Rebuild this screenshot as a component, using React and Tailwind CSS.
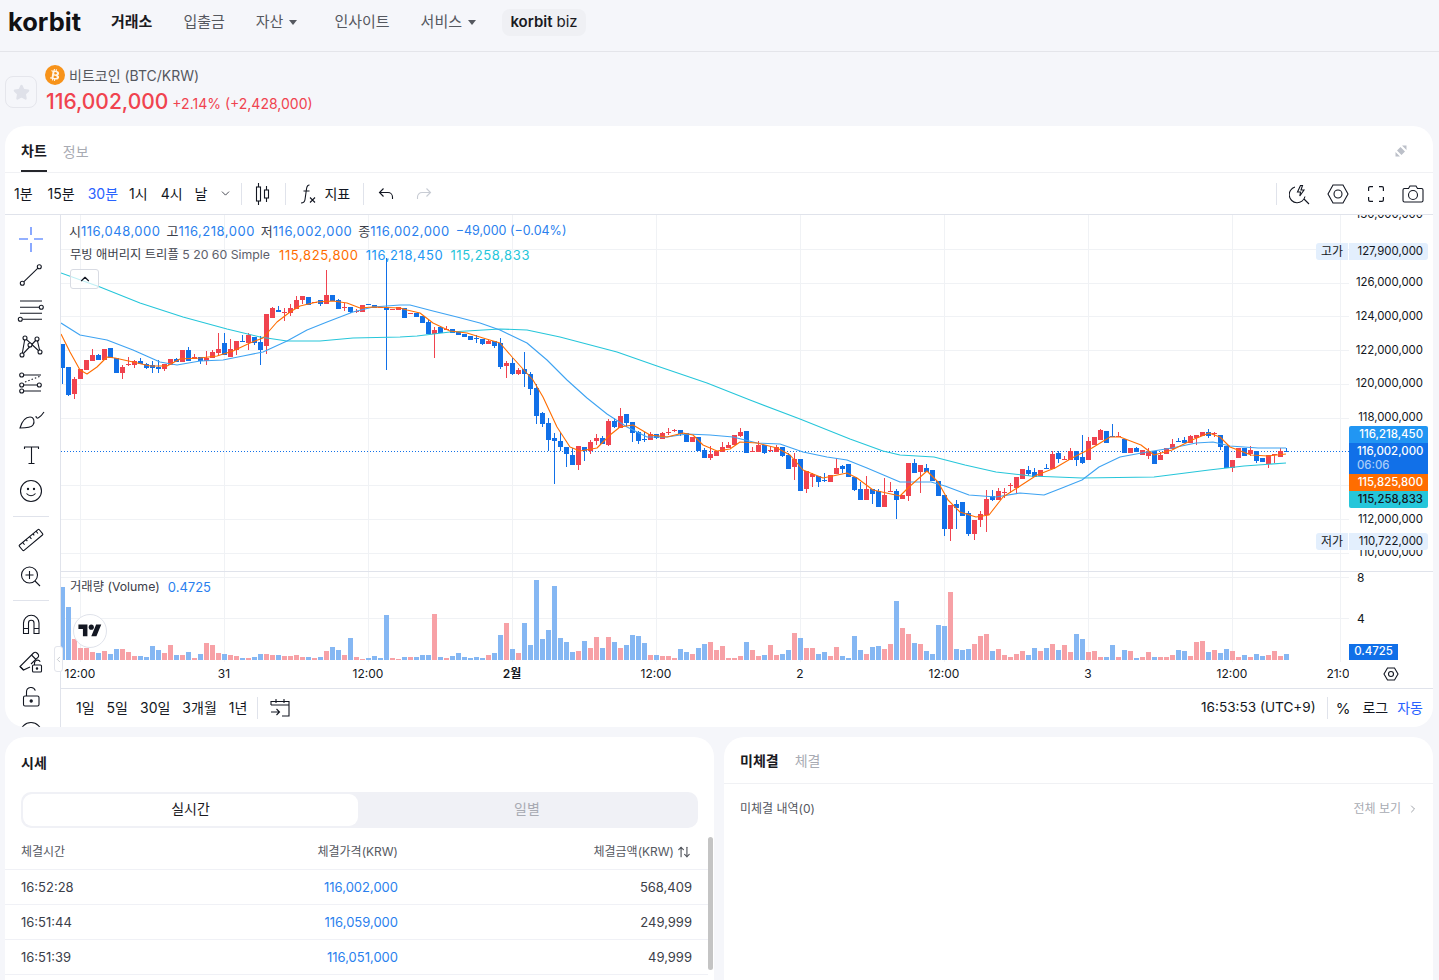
import React from "react";
import { Star, ChevronDown, ChevronUp, ChevronLeft, ChevronRight, ArrowUpDown } from "lucide-react";
import { FaBtc } from "react-icons/fa";

// candle rows: [colour, bodyTop, bodyBottom, high, low], values read at 3x from the chart
const section1 = [
  ["b",387,458,387,507],["b",456,540,456,543],["r",492,538,487,552],["r",462,492],["r",435,465],["r",420,438,402,438],["b",420,435,416,435],["r",402,435],["b",399,428],["b",429,474],["r",456,474,450,492],["r",448,451,426,453],["r",438,450,435,459],["b",438,447,429,447],["b",447,459,445,462],["b",450,459,438,474],["b",456,462,435,474],["r",447,462,447,468],["r",432,450],["b",432,441,429,441],["r",405,441],["b",405,438,396,438],["r",426,431,417,431],["b",426,438,426,447],["r",429,438,408,450],["r",411,429,405,429],["r",402,414,354,423],["b",384,420,354,420],["r",402,426,372,426],["r",378,405,378,420],["b",378,381,360,381],["r",360,384,354,405],["b",366,384,366,390],["b",381,405,363,450],["r",297,393,297,417],["r",279,309,276,309],["b",285,291,273,291],["r",291,294,279,318],["r",279,294,267,303],["r",255,282,243,282],["r",243,255,243,267],["b",246,270],["r",261,264],["b",255,267,255,273],["r",240,267,165,267],["b",240,258],["b",255,282,252,282],["r",276,279,264,288],["b",276,291,276,294],["r",288,291,282,294],["r",270,291],["b",267,270],["b",270,279],["r",276,279],["b",276,285,130,465],["r",282,285],["r",276,285],
];
const section2 = [
  ["b",144,174],["r",159,161],["b",159,171],["b",168,189],["b",186,222,180,222],["r",210,222,201,294],["b",201,219,198,219],["r",207,210,198,210],["b",207,219],["b",216,225],["b",222,231],["b",228,240],["b",233,235,225,249],["b",237,252,237,255],["r",243,252,237,252],["b",243,258,243,264],["b",249,321,234,327],["r",309,318,303,354],["b",309,342,294,345],["r",330,342,324,345],["b",327,342,276,381],["b",342,387,336,405],["b",384,468,372,492],["b",459,492,456,501],["b",489,540,474,573],["b",534,543,519,672],["b",543,561,516,573],["b",561,582,561,621],["b",585,615,564,615],["r",558,615,558,630],["b",561,574,561,603],["r",546,574,540,582],["r",534,543,522,555],["b",534,552,528,552],["r",483,555,477,558],["b",483,501,474,504],["r",468,504,444,504],["b",462,489,462,501],["b",486,519,486,546],["b",516,543,513,552],["b",537,540,516,546],["r",522,540,516,540],["b",522,534,522,537],["r",519,537,516,537],["r",516,519,504,525],["r",510,514,507,516],["b",510,522,510,528],["b",519,546],["r",531,546],["b",531,573],["b",570,594,564,594],["r",582,594,558,600],["r",573,588],["r",561,576,546,576],["r",555,564,546,564],["r",525,555],["r",516,528,504,531],["b",513,579],["r",573,576,561,576],["r",555,576,543,576],["b",555,579,555,582],["r",570,573,558,576],["r",561,576,555,576],["b",561,588,561,591],["b",585,627,579,627],["r",597,621,579,660],["b",597,693],["r",633,687,633,699],["r",642,651,639,681],["b",648,666,648,681],["b",660,662,639,665],["r",645,666],["r",624,642,594,642],["b",618,627,615,639],["b",612,651],["b",651,690,651,693],["b",687,720,666,720],["r",687,720,648,720],["b",687,702,687,732],["b",693,741,687,741],["r",705,741,654,741],["r",693,696,666,696],["b",693,720,687,777],
];
const section3 = [
  ["r",345,358],["r",250,348,250,362],["b",250,279,238,279],["r",255,276,255,339],["b",264,276,252,276],["b",270,303],["b",303,348],["b",345,447,345,467],["r",375,447,375,483],["b",372,384,360,447],["b",366,408],["b",399,462,393,468],["r",420,462,420,480],["r",402,420,393,441],["r",357,405,330,456],["b",348,360,330,363],["r",333,360,324,360],["r",336,339,324,354],["r",315,318,309,339],["r",291,324,291,339],["r",267,297],["b",270,282,258,288],["b",276,291,264,291],["r",270,288],["b",264,267,252,267],["r",222,267,213,267],["b",219,237,213,249],["r",237,240,228,240],["r",213,240,204,240],["b",213,240,213,258],["b",231,249,165,252],["r",183,240,172,240],["r",171,195],["r",150,180,147,180],["b",153,189],["b",168,171,132,171],["r",168,171,156,171],["b",177,219],["r",204,219],["b",204,216,201,216],["r",210,225],["r",213,228,204,237],["b",213,252],["r",225,240,216,240],["r",204,222],["r",192,207,177,207],["b",183,186,174,186],["b",180,189,171,189],["r",168,189,165,189],["r",165,174,165,195],["r",156,168],["b",156,168,147,174],["r",159,162,156,172],["b",165,201,165,210],["b",198,264],["r",240,264,240,276],["r",204,234],["b",204,228],["r",210,222,198,228],["b",213,243,213,249],["b",234,246],["r",225,252,225,264],["r",222,225,222,249],["r",213,231,204,231],["b",213,214,204,214],
];

const toCandles = (rows, startIndex, baseY) =>
  rows.map(([c, top, bottom, high = top, low = bottom], i) => ({
    i: startIndex + i,
    color: c === "b" ? "#1170e8" : "#f0434f",
    top: baseY + top / 3,
    bottom: baseY + bottom / 3,
    high: baseY + high / 3,
    low: baseY + low / 3,
  }));

const candles = [
  ...toCandles(section1, 0, 215),
  ...toCandles(section2, 57, 260),
  ...toCandles(section3, 140, 380),
];

// volume: top of each bar (3x from y=570) and direction
const volumeText = "50b 110b 207r 234r 234r 246r 249b 243r 252b 237b 237r 246r 258r 258b 261b 228b 240b 249r 225r 255b 255r 246b 264r 252b 219r 225r 249r 252b 255r 258r 264b 264r 261b 252b 252r 255r 255b 258r 258r 255r 261r 261b 264r 261b 243r 231b 240b 255r 204b 261r 267r 264b 258b 264b 135b 264r 267r 261b 261r 261b 255b 255b 132r 261b 264r 258b 249b 261b 264b 261b 264b 255r 249b " +
  "195b 159r 237b 249r 159b 225b 30b 207b 180b 48b 204b 216b 246b 243r 213b 234r 201r 234b 201r 216b 234r 225b 195b 198b 219b 255r 255b 258r 258r 264r 237b 246b 252r 234b 222b 216r 240r 228r 264r 264r 258r 216b 240r 258r 255b 225r 255r 252b 240b 189r 204b 234r 234r 252b 246b 258r 231r 258b 264b 198b 240b 252r 231b 228b 237r 222r 93b 174r 192r 219b 222r 243b 252b 165b 168b 66r 237b 240b 237b 222r 198r 192r 243b 237r " +
  "255r 261r 252r 243r 255b 234b 243r 234b 222r 240b 225r 246r 192b 207b 246r 243r 261r 261b 225b 261r 240b 243r 264b 261r 246r 261b 261r 261r 255r 240b 243b 258r 216r 213r 246b 240r 249b 237b 243r 261r 255b 261r 252b 258b 255r 243r 258r 252b";
const volumes = volumeText.split(" ").map((v, i) => ({
  i,
  top: 570 + parseInt(v) / 3,
  color: v.endsWith("b") ? "#85b7f3" : "#f7a1a6",
}));

const ma5 = "61,334 70,352 80,370 87,374 97,367 107,357 115,358 133,362 150,366 167,366 180,359 200,358 217,356 233,351 250,343 263,338 277,322 290,312 300,306 317,302 333,301 347,303 360,308 373,307 400,308 407,310 420,313 433,323 450,331 467,333 483,338 500,343 513,358 533,380 543,397 557,427 570,447 580,451 597,448 610,435 620,427 633,425 650,435 667,437 683,433 693,435 703,445 717,451 730,449 740,442 757,443 777,448 790,455 803,470 823,478 847,473 857,478 873,490 900,496 909,487 927,471 938,482 948,500 960,512 976,517 989,515 1003,497 1017,488 1037,475 1055,468 1072,458 1092,448 1110,437 1120,437 1141,445 1154,455 1172,450 1192,440 1209,433 1220,437 1230,447 1251,455 1268,456 1286,454";
const ma20 = "61,323 80,335 107,340 133,350 160,362 177,365 200,361 223,360 243,356 263,352 287,341 307,330 327,322 353,312 373,307 400,305 410,305 433,311 457,317 480,323 500,330 527,343 547,360 567,380 587,398 607,414 627,427 647,437 667,437 687,434 710,435 733,437 757,443 780,444 803,452 827,457 847,460 867,468 900,482 931,482 945,486 969,495 996,497 1020,493 1044,495 1062,488 1082,480 1099,467 1120,457 1147,452 1172,448 1196,443 1213,442 1230,446 1258,448 1286,448";
const ma60 = "61,273 100,287 140,303 183,317 227,329 260,337 287,341 320,341 353,338 400,337 417,336 450,332 500,329 527,330 560,337 617,352 657,366 707,383 750,400 800,419 850,439 883,451 900,455 934,457 965,465 996,472 1031,476 1082,478 1154,477 1209,470 1244,466 1286,463";

const gridY = [249, 283, 316, 350, 384, 418, 485, 519, 553];
const gridX = [80, 224, 368, 512, 656, 800, 944, 1088, 1232, 1340];
const priceTicks = [
  { label: "130,000,000", y: 215 }, { label: "126,000,000", y: 283 }, { label: "124,000,000", y: 317 },
  { label: "122,000,000", y: 351 }, { label: "120,000,000", y: 384 }, { label: "118,000,000", y: 418 },
  { label: "112,000,000", y: 520 }, { label: "110,000,000", y: 553 }, { label: "8", y: 578, left: true }, { label: "4", y: 619, left: true },
];
const timeTicks = [
  { label: "12:00", x: 80 }, { label: "31", x: 224 }, { label: "12:00", x: 368 }, { label: "2월", x: 512, bold: true },
  { label: "12:00", x: 656 }, { label: "2", x: 800 }, { label: "12:00", x: 944 }, { label: "3", x: 1088 }, { label: "12:00", x: 1232 }, { label: "21:0", x: 1338 },
];

const trades = [
  ["16:52:28", "116,002,000", "568,409"],
  ["16:51:44", "116,059,000", "249,999"],
  ["16:51:39", "116,051,000", "49,999"],
];

function ChartDrawing() {
  return (
    <svg width="1372" height="473" viewBox="61 215 1372 473" className="absolute left-0 top-0" shapeRendering="crispEdges">
      {gridY.map((y) => <rect key={y} x="61" y={y} width="1288" height="1" fill="#f0f2f5" />)}
      <rect x="61" y="577" width="1288" height="1" fill="#f0f2f5" />
      <rect x="61" y="618" width="1288" height="1" fill="#f0f2f5" />
      {gridX.map((x) => <rect key={x} x={x} y="215" width="1" height="447" fill="#f0f2f5" />)}
      <rect x="61" y="571" width="1372" height="1" fill="#e0e3eb" />
      <line x1="61" y1="451.5" x2="1349" y2="451.5" stroke="#1170e8" strokeDasharray="1 2" />
      {volumes.map((v) => (
        <rect key={v.i} x={60 + 6 * v.i} y={v.top} width="5" height={660 - v.top} fill={v.color} />
      ))}
      {candles.map((c) => (
        <g key={c.i} fill={c.color}>
          <rect x={62 + 6 * c.i} y={c.high} width="1" height={c.low - c.high} />
          <rect x={60 + 6 * c.i} y={c.top} width="5" height={Math.max(c.bottom - c.top, 1)} />
        </g>
      ))}
      <g fill="none" strokeWidth="1.1" strokeLinejoin="round" shapeRendering="geometricPrecision">
        <polyline points={ma60} stroke="#26c6da" />
        <polyline points={ma20} stroke="#3ea3f2" />
        <polyline points={ma5} stroke="#ff6d00" />
      </g>
    </svg>
  );
}

function ToolIcon({ children, className = "" }) {
  return (
    <svg width="28" height="28" viewBox="0 0 28 28" fill="none" stroke="#131722" strokeWidth="1.1" className={className}>
      {children}
    </svg>
  );
}

function Node({ x, y }) {
  return <circle cx={x} cy={y} r="2" fill="#fff" />;
}

function ToolSlot({ children }) {
  return <div className="flex h-9 shrink-0 items-center">{children}</div>;
}

function LeftTools() {
  return (
    <div className="flex h-full w-[56px] shrink-0 flex-col items-center overflow-hidden border-r border-[#e0e3eb] pr-[3px] pt-[6px]">
      {/* crosshair */}
      <ToolSlot>
        <ToolIcon><path d="M14 2v8M14 18v9M2 14h9M17 14h9" stroke="#2962ff" /></ToolIcon>
      </ToolSlot>
      <ToolSlot>
        <ToolIcon><path d="M6.700 20.800 20.900 7.200" /><Node x={5.3} y={22.3} /><Node x={22.3} y={5.7} /></ToolIcon>
      </ToolSlot>
      <ToolSlot>
        <ToolIcon>
          <path d="M3 4h22M3 10.300h19M3 16.300h22M5.500 22.300H25" /><Node x={24.3} y={10.3} /><Node x={3.3} y={22.3} />
        </ToolIcon>
      </ToolSlot>
      <ToolSlot>
        <ToolIcon>
          <path d="M5 22 8 5l15 14L20 6z" /><Node x={8} y={5} /><Node x={20} y={6} /><Node x={13} y={12} /><Node x={5} y={22} /><Node x={23} y={19} />
        </ToolIcon>
      </ToolSlot>
      <ToolSlot>
        <ToolIcon>
          <path d="M7 6h17M7 16h13M7 22h17" /><path d="M8 13 24 7" strokeDasharray="1.500 2" />
          <Node x={4.7} y={6} /><Node x={4.7} y={16} /><Node x={22.3} y={16} /><Node x={4.7} y={22} />
        </ToolIcon>
      </ToolSlot>
      <ToolSlot>
        <ToolIcon>
          <path d="M3 23C5 16 9 12 13 12c4 0 5 5 3 8-2 3-8 3-13 3Z" /><path d="M19 11c0 4 4 2 8-4" />
        </ToolIcon>
      </ToolSlot>
      <ToolSlot>
        <ToolIcon><path d="M7.500 8V6h14v2M14.500 6v16.500M11.500 22.500h6" /></ToolIcon>
      </ToolSlot>
      <ToolSlot>
        <ToolIcon>
          <circle cx="14" cy="14" r="10.500" /><circle cx="11" cy="12" r=".6" fill="#131722" /><circle cx="17" cy="12" r=".6" fill="#131722" /><path d="M9.500 16.500c2.500 3 6.500 3 9 0" />
        </ToolIcon>
      </ToolSlot>
      <div className="mb-[5px] mt-[7px] h-px w-9 shrink-0 bg-[#e0e3eb]" />
      <ToolSlot>
        <ToolIcon>
          <g transform="rotate(-40 14 14)">
            <rect x="1" y="10.500" width="26" height="7" rx="1" /><path d="M6 10.500v3M10.500 10.500v2M15 10.500v3M19.500 10.500v2M23.500 10.500v3" />
          </g>
        </ToolIcon>
      </ToolSlot>
      <ToolSlot>
        <ToolIcon><circle cx="12.500" cy="13" r="8" /><path d="M12.500 9v8M8.500 13h8M18 19l5 5" /></ToolIcon>
      </ToolSlot>
      <div className="mb-[6px] mt-[6px] h-px w-9 shrink-0 bg-[#e0e3eb]" />
      <ToolSlot>
        <ToolIcon>
          <path d="M6.500 22.500V12a7.750 7.750 0 0 1 15.500 0v10.500h-5V12a2.750 2.750 0 0 0-5.500 0v10.500zM6.500 17.500h5M16.500 17.500h5.500" />
        </ToolIcon>
      </ToolSlot>
      <ToolSlot>
        <ToolIcon>
          <path d="M13 20 6.500 23 3 19.500 16.500 6a2.400 2.400 0 0 1 3.400 0l1 1a2.400 2.400 0 0 1 0 3.400L14 17" />
          <path d="M14.500 8 19 12.500M3 19.500l3.500 3.500" />
          <rect x="15.500" y="18" width="9" height="7" rx="1" /><path d="M17.500 18v-2a3 3 0 0 1 5.700-1.200" /><circle cx="20" cy="21.500" r=".7" fill="#131722" />
        </ToolIcon>
      </ToolSlot>
      <ToolSlot>
        <ToolIcon>
          <rect x="6.500" y="13" width="15.500" height="10" rx="1.500" /><path d="M9.500 13V9a4.500 4.500 0 0 1 8.800-1.300" /><circle cx="14.200" cy="18" r="1.100" fill="#131722" />
        </ToolIcon>
      </ToolSlot>
      <ToolSlot>
        <ToolIcon><circle cx="14" cy="14" r="10.500" /><circle cx="14" cy="12" r="3" /></ToolIcon>
      </ToolSlot>
    </div>
  );
}

function TimeButton({ children, active, className = "" }) {
  return <span className={`${active ? "text-[#2962ff]" : "text-[#131722]"} ${className}`}>{children}</span>;
}

function ToolbarDivider({ className = "" }) {
  return <div className={`h-[22px] w-px bg-[#e0e3eb] ${className}`} />;
}

function ChartToolbar() {
  return (
    <div className="flex h-[42px] items-center border-b border-[#e0e3eb] pl-[9px] pr-[9px] text-[14px] leading-none">
      <div className="flex items-center gap-[13px]">
        <TimeButton>1분</TimeButton>
        <TimeButton className="ml-[2px]">15분</TimeButton>
        <TimeButton active>30분</TimeButton>
        <TimeButton className="-ml-[2px]">1시</TimeButton>
        <TimeButton>4시</TimeButton>
        <TimeButton className="-ml-[1px]">날</TimeButton>
      </div>
      <ChevronDown size={13} strokeWidth={1.4} className="ml-[12px] text-[#131722]" />
      <ToolbarDivider className="ml-[9px]" />
      <svg width="16" height="22" viewBox="0 0 16 22" fill="none" stroke="#131722" strokeWidth="1.1" className="ml-[12px]">
        <path d="M4.500 0v4M4.500 18v4M12.500 3v4M12.500 15v4" />
        <rect x="2.500" y="4" width="4" height="14" /><rect x="10.500" y="7" width="4" height="8" />
      </svg>
      <ToolbarDivider className="ml-[15px]" />
      <svg width="16" height="20" viewBox="0 0 16 20" fill="none" stroke="#131722" strokeWidth="1.1" className="ml-[14px]">
        <path d="M9.500 1C7 1 6.800 2.500 6.500 5L5 15.500C4.700 18 3.500 19 1 19M3.500 7h6M10 13.500l5 5M15 13.500l-5 5" />
      </svg>
      <span className="ml-[8px] text-[#131722]">지표</span>
      <ToolbarDivider className="ml-[13px]" />
      <svg width="16" height="14" viewBox="0 0 16 14" fill="none" stroke="#131722" strokeWidth="1.1" className="ml-[14px]">
        <path d="M5.500 1.500 1.500 5.500l4 4M1.500 5.500H10a4.500 4.500 0 0 1 4.500 4.500v2" />
      </svg>
      <svg width="16" height="14" viewBox="0 0 16 14" fill="none" stroke="#c8ccd4" strokeWidth="1.1" className="ml-[22px]">
        <path d="M10.500 1.500l4 4-4 4M14.500 5.500H6A4.500 4.500 0 0 0 1.500 10v2" />
      </svg>

      <div className="ml-auto flex items-center">
        <ToolbarDivider className="mr-[12px]" />
        <svg width="22" height="22" viewBox="0 0 22 22" fill="none" stroke="#131722" strokeWidth="1.1">
          <path d="M6 4a8 8 0 1 0 10 9.500M15 16l5 5" />
          <path d="M11.500 2.500 8.500 9h3l-.7 4 4.200-6h-3l1.500-4.500z" />
        </svg>
        <svg width="22" height="20" viewBox="0 0 22 20" fill="none" stroke="#131722" strokeWidth="1.1" className="ml-[16px]">
          <path d="M6 1h10l5 9-5 9H6l-5-9z" /><circle cx="11" cy="10" r="4" />
        </svg>
        <svg width="16" height="16" viewBox="0 0 16 16" fill="none" stroke="#131722" strokeWidth="1.2" className="ml-[19px]">
          <path d="M.6 5V2A1.400 1.400 0 0 1 2 .6h3M11 .6h3A1.400 1.400 0 0 1 15.400 2v3M15.400 11v3a1.400 1.400 0 0 1-1.400 1.400h-3M5 15.400H2A1.400 1.400 0 0 1 .6 14v-3" />
        </svg>
        <svg width="22" height="18" viewBox="0 0 22 18" fill="none" stroke="#131722" strokeWidth="1.1" className="ml-[18px]">
          <path d="M1 5a1.500 1.500 0 0 1 1.500-1.500h4l1.500-2.500h6l1.500 2.500h4A1.500 1.500 0 0 1 21 5v10.500a1.500 1.500 0 0 1-1.500 1.500h-17A1.500 1.500 0 0 1 1 15.500z" />
          <circle cx="11" cy="10" r="4.500" />
        </svg>
      </div>
    </div>
  );
}

function PriceTag({ className, label, children }) {
  return (
    <>
      <span className={`absolute left-[1255px] flex h-[17px] w-[32px] items-center justify-center rounded-l-[3px] bg-[#e3effd] text-[12px] text-[#131722] ${className}`}>
        {label}
      </span>
      <span className={`absolute left-[1288px] flex h-[17px] w-[79px] items-center justify-end rounded-r-[3px] bg-[#e3effd] pr-[5px] ${className}`}>
        {children}
      </span>
    </>
  );
}

function ChartArea() {
  return (
    <div className="relative h-[474px] overflow-hidden border-b border-[#e0e3eb] text-[12px] text-[#131722]">
      <ChartDrawing />

      {/* legend */}
      <div className="absolute left-[8px] top-[8px] flex h-[17px] items-center whitespace-nowrap text-[13px] leading-none text-[#3c4049]">
        <span>시</span><span className="tracking-[0.5px] text-[#2a7fee]">116,048,000</span>
        <span className="ml-[6px]">고</span><span className="tracking-[0.5px] text-[#2a7fee]">116,218,000</span>
        <span className="ml-[6px]">저</span><span className="tracking-[0.5px] text-[#2a7fee]">116,002,000</span>
        <span className="ml-[6px]">종</span><span className="tracking-[0.5px] text-[#2a7fee]">116,002,000</span>
        <span className="ml-[6px] text-[12.5px] text-[#2a7fee]">−49,000 (−0.04%)</span>
      </div>
      <div className="absolute left-[9px] top-[32px] flex h-[17px] items-center gap-[7px] whitespace-nowrap text-[13px] leading-none text-[#5d606b]">
        <span className="text-[12.3px]"><span className="text-[#3c4049]">무빙 애버리지 트리플</span> 5 20 60 Simple</span>
        <span className="ml-[2px] tracking-[0.6px] text-[#ff6d00]">115,825,800</span>
        <span className="tracking-[0.6px] text-[#2196f3]">116,218,450</span>
        <span className="tracking-[0.6px] text-[#26c6da]">115,258,833</span>
      </div>
      <div className="absolute left-[9px] top-[54px] flex h-[20px] w-[29px] items-center justify-center rounded-[3px] border border-[#d8dbe3] bg-white/70">
        <ChevronUp size={14} strokeWidth={2} className="text-[#131722]" />
      </div>
      <div className="absolute left-[9px] top-[364px] flex h-[17px] items-center gap-[8px] whitespace-nowrap text-[12.3px] leading-none text-[#3c4049]">
        <span>거래량 (Volume)</span><span className="text-[13px] text-[#2a7fee]">0.4725</span>
      </div>

      {/* tradingview badge */}
      <div className="absolute left-[12px] top-[399px] flex h-[34px] w-[34px] items-center justify-center rounded-full border border-[#e0e3eb] bg-white">
        <svg width="24" height="18" viewBox="0 0 36 28" fill="#131722">
          <path d="M14 22H7V11H0V4h14v18zM28 22h-8l7.500-18h8L28 22z" /><circle cx="20" cy="8" r="4" />
        </svg>
      </div>

      {/* axes */}
      {priceTicks.map((t) => (
        <span
          key={t.label}
          className={`absolute -translate-y-1/2 whitespace-nowrap text-[11.4px] ${t.left ? "left-[1296px] text-[12px]" : "right-[10px]"}`}
          style={{ top: t.y - 215 }}
        >
          {t.label}
        </span>
      ))}
      {timeTicks.map((t) => (
        <span
          key={t.x}
          className={`absolute top-[459px] -translate-x-1/2 -translate-y-1/2 whitespace-nowrap ${t.bold ? "font-semibold" : ""}`}
          style={{ left: t.x - 61 }}
        >
          {t.label}
        </span>
      ))}
      <div className="absolute left-[1288px] top-[445px] h-[28px] w-[84px] bg-white" />
      <svg width="16" height="14" viewBox="0 0 16 14" fill="none" stroke="#131722" strokeWidth="1.1" className="absolute left-[1322px] top-[452px]">
        <path d="M4.500 1h7L15 7l-3.500 6h-7L1 7z" /><circle cx="8" cy="7" r="2.500" />
      </svg>

      {/* price tags */}
      <div className="text-[11.4px]">
        <PriceTag className="top-[28px]" label="고가">127,900,000</PriceTag>
        <PriceTag className="top-[318px]" label="저가">110,722,000</PriceTag>
        <span className="absolute left-[1288px] top-[211px] flex h-[17px] w-[79px] items-center justify-end rounded-t-[2px] bg-[#2196f3] pr-[5px] font-medium text-white">116,218,450</span>
        <div className="absolute left-[1288px] top-[228px] flex h-[31px] w-[79px] flex-col bg-[#1170e8] pl-[8px] pr-[5px] font-medium leading-[14px] text-white">
          <span className="pt-[1px] text-right">116,002,000</span>
          <span className="text-[#a9cdf8]">06:06</span>
        </div>
        <span className="absolute left-[1288px] top-[259px] flex h-[17px] w-[79px] items-center justify-end bg-[#ff6d00] pr-[5px] font-medium text-white">115,825,800</span>
        <span className="absolute left-[1288px] top-[276px] flex h-[17px] w-[79px] items-center justify-end rounded-b-[2px] bg-[#26c6da] pr-[5px] font-medium text-[#131722]">115,258,833</span>
        <span className="absolute left-[1288px] top-[429px] flex h-[16px] w-[49px] items-center justify-center bg-[#1170e8] font-medium text-white">0.4725</span>
      </div>
    </div>
  );
}

function ChartBottomBar() {
  return (
    <div className="flex h-[38px] items-center pl-[15px] pr-[10px] text-[14px] leading-none text-[#131722]">
      <div className="flex items-center gap-[12px]">
        <span>1일</span><span>5일</span><span>30일</span><span>3개월</span><span>1년</span>
      </div>
      <div className="ml-[10px] h-[22px] w-px bg-[#e0e3eb]" />
      <svg width="20" height="20" viewBox="0 0 20 20" fill="none" stroke="#131722" strokeWidth="1.1" className="ml-[12px]">
        <path d="M1 7V3.500h18V18h-7M1 7h18M6 1v4M14 1v4M1 14h8M6.500 11l3 3-3 3" />
      </svg>
      <div className="ml-auto flex items-center">
        <span className="text-[13.6px]">16:53:53 (UTC+9)</span>
        <div className="ml-[11px] h-[22px] w-px bg-[#e0e3eb]" />
        <span className="ml-[8px] text-[15px]">%</span>
        <span className="ml-[12px]">로그</span>
        <span className="ml-[9px] text-[#2962ff]">자동</span>
      </div>
    </div>
  );
}

function ChartCard() {
  return (
    <section className="relative mx-[5px] h-[601px] w-[1428px] overflow-hidden rounded-[20px] bg-white">
      <div className="flex h-[47px] items-stretch gap-[16px] border-b border-[#f0f1f4] pl-[16px] pr-[26px] text-[14px]">
        <span className="flex items-center border-b-2 border-[#25262b] pt-[4px] font-semibold text-[#1a1a1f]">차트</span>
        <span className="flex items-center pt-[4px] text-[#a8abb3]">정보</span>
        <div className="ml-auto flex items-center pt-[4px]">
          <svg width="12" height="12" viewBox="0 0 12 12" fill="#bcc0c9">
            <path d="M7 .5h4.500V5zM.5 7 5 11.500H.5zM2 5.500 5.500 2 10 6.500 6.500 10z" />
          </svg>
        </div>
      </div>
      <ChartToolbar />
      <div className="flex h-[512px]">
        <LeftTools />
        <div className="min-w-0 flex-1">
          <ChartArea />
          <ChartBottomBar />
        </div>
      </div>
      <div className="absolute left-[49px] top-[520px] flex h-[26px] w-[9px] items-center justify-center rounded-[3px] border border-[#e3e5ec] bg-white">
        <ChevronLeft size={9} strokeWidth={1.5} className="shrink-0 text-[#9a9ea8]" />
      </div>
    </section>
  );
}

function PriceCard() {
  return (
    <section className="relative h-[300px] w-[709px] rounded-t-[20px] bg-white pt-[16px]">
      <h2 className="pl-[16px] text-[14px] font-semibold leading-[20px] text-[#1a1a1f]">시세</h2>
      <div className="ml-[16px] mt-[19px] flex h-[36px] w-[677px] items-center rounded-[10px] bg-[#f0f1f6] p-[2px] text-[14px]">
        <div className="flex h-[32px] w-[335px] items-center justify-center rounded-[9px] bg-white pb-[3px] text-[#1a1a1f]">실시간</div>
        <div className="flex flex-1 items-center justify-center pb-[3px] text-[#a8abb3]">일별</div>
      </div>
      <div className="mr-[6px] mt-[6px]">
        <div className="grid h-[36px] grid-cols-[200px_177px_1fr] items-center border-b border-[#f0f1f6] pl-[16px] pr-[17px] text-[12px] text-[#55585f]">
          <span>체결시간</span>
          <span className="text-right">체결가격(KRW)</span>
          <span className="flex items-center justify-end gap-[3px]">
            체결금액(KRW)
            <ArrowUpDown size={14} strokeWidth={2} className="text-[#55585f]" />
          </span>
        </div>
        {trades.map(([time, price, amount]) => (
          <div key={time} className="grid h-[35px] grid-cols-[200px_177px_1fr] items-center border-b border-[#f0f1f6] pl-[16px] pr-[16px] pt-[1px] text-[13px] text-[#3c4049]">
            <span>{time}</span>
            <span className="text-right text-[#2a7fee]">{price}</span>
            <span className="text-right">{amount}</span>
          </div>
        ))}
      </div>
      <div className="absolute left-[703px] top-[100px] h-[133px] w-[5px] rounded-full bg-[#c4c4c4]" />
    </section>
  );
}

function OrdersCard() {
  return (
    <section className="h-[300px] w-[709px] rounded-t-[20px] bg-white">
      <div className="flex h-[47px] items-center gap-[16px] border-b border-[#f0f1f4] pl-[16px] pt-[1px] text-[14px]">
        <span className="font-semibold text-[#1a1a1f]">미체결</span>
        <span className="text-[#a8abb3]">체결</span>
      </div>
      <div className="flex h-[48px] items-center justify-between pl-[16px] pr-[14px] pt-[1px] text-[12px]">
        <span className="text-[#55585f]">미체결 내역(0)</span>
        <span className="flex items-center gap-[6px] text-[#a8abb3]">
          전체 보기
          <ChevronRight size={12} strokeWidth={1.6} className="text-[#888b93]" />
        </span>
      </div>
    </section>
  );
}

function Header() {
  return (
    <header className="flex h-[52px] items-center border-b border-[#e4e5ea] pb-[12px] pl-[8px] pt-[5px] text-[15px] text-[#55585f]">
      <span className="text-[25.5px] font-bold leading-none text-[#111114]">korbit</span>
      <nav className="ml-[30px] flex items-center">
        <span className="font-semibold text-[#1a1a1f]">거래소</span>
        <span className="ml-[31px]">입출금</span>
        <span className="ml-[31px] flex items-center gap-[6px]">자산<i className="h-0 w-0 border-x-[4px] border-t-[5px] border-x-transparent border-t-[#55585f]" /></span>
        <span className="ml-[37px]">인사이트</span>
        <span className="ml-[31px] flex items-center gap-[6px]">서비스<i className="h-0 w-0 border-x-[4px] border-t-[5px] border-x-transparent border-t-[#55585f]" /></span>
        <span className="ml-[26px] flex h-[27px] w-[84px] items-center justify-center gap-[4px] rounded-[8px] bg-[#eff0f4] text-[#1a1a1f]">
          <b className="font-semibold">korbit</b> biz
        </span>
      </nav>
    </header>
  );
}

function SymbolRow() {
  return (
    <div className="flex h-[74px] pl-[5px]">
      <div className="mt-[24px] flex h-8 w-8 items-center justify-center rounded-[8px] border border-[#e5e6ec]">
        <Star size={17} className="fill-[#dfe1e9] text-[#dfe1e9]" />
      </div>
      <div className="ml-[8px] pt-[13px]">
        <div className="flex h-5 items-center gap-[4px] text-[14px] text-[#55585f]">
          <span className="flex h-5 w-5 items-center justify-center rounded-full bg-[#f7931a]">
            <FaBtc size={12} className="rotate-[10deg] text-white/90" />
          </span>
          비트코인 (BTC/KRW)
        </div>
        <div className="mt-[3px] flex items-baseline gap-[4px] whitespace-nowrap pl-[1px] text-[#f0434f]">
          <span className="text-[21px] font-medium leading-[28px]">116,002,000</span>
          <span className="text-[14px]">+2.14% (+2,428,000)</span>
        </div>
      </div>
    </div>
  );
}

export default function App() {
  return (
    <div className="h-[980px] w-full overflow-hidden bg-[#f5f6fa] font-['Inter','Noto_Sans_CJK_KR',sans-serif]">
      <Header />
      <SymbolRow />
      <ChartCard />
      <div className="mx-[5px] mt-[10px] flex gap-[10px]">
        <PriceCard />
        <OrdersCard />
      </div>
    </div>
  );
}
